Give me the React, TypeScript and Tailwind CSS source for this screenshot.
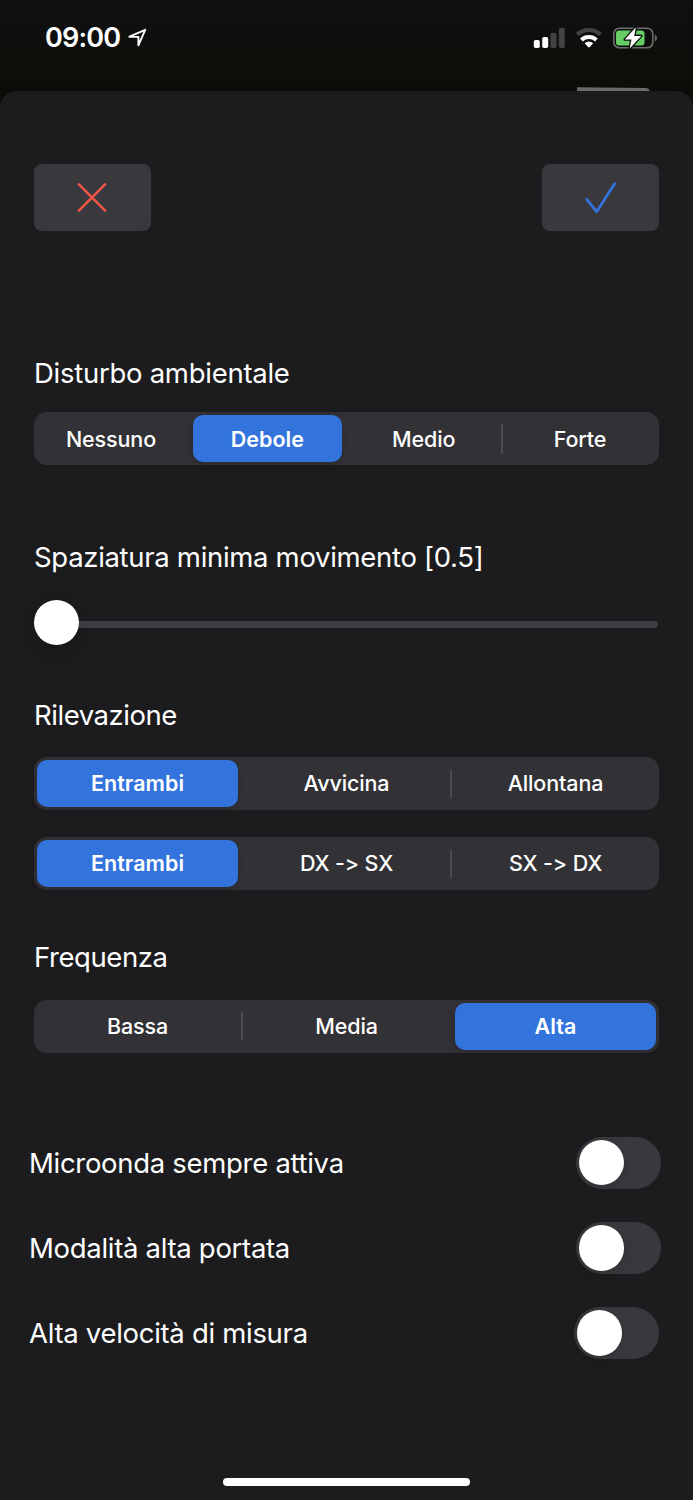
import { useState } from "react";
import clsx from "clsx";

function StatusBar() {
  return (
    <header className="flex h-[87px] w-full shrink-0 items-start justify-between bg-linear-to-b from-[#101011] to-[#0b0e08] pl-[45px] pr-[36px] pt-[22px]">
      <div className="flex h-8 items-center">
        <span className="w-[83px] whitespace-nowrap text-[27px] font-semibold leading-8 tracking-[-0.8px]">09:00</span>
        <svg className="h-8 w-5" viewBox="0 0 20 32" fill="none" stroke="#fff" strokeWidth="1.9" strokeLinejoin="round">
          <path d="M1.4 14.7 17.2 7.8 10.4 23.3V14.9Z" />
        </svg>
      </div>
      <div className="flex h-8 items-center">
        <svg className="h-8 w-[124px]" viewBox="533 22 124 32">
          <rect x="533.8" y="40" width="6" height="8" rx="1.8" fill="#fff" />
          <rect x="542.2" y="37" width="6" height="11" rx="1.8" fill="#fff" />
          <rect x="550.5" y="32.7" width="6" height="15.3" rx="1.8" fill="#424341" />
          <rect x="558.8" y="28" width="6" height="20" rx="1.8" fill="#424341" />
          <g fill="none">
            <path d="M577.3 34.4A17.2 17.2 0 0 1 600.5 34.4" stroke="#424341" strokeWidth="4" />
            <path d="M581.4 39.9A11.2 11.2 0 0 1 596.4 39.9" stroke="#fff" strokeWidth="4" />
          </g>
          <path d="M584.6 43.2Q588.9 39.9 593.2 43.2L589.7 47.1Q588.9 48 588.1 47.1Z" fill="#fff" />
          <rect x="613.8" y="28.2" width="39" height="19.6" rx="5.6" fill="none" stroke="#6c6e69" strokeWidth="1.6" />
          <path d="M654.9 34.6Q657 35.6 657 38T654.9 41.4Z" fill="#6c6e69" />
          <rect x="616" y="30.5" width="28.5" height="15" rx="3.2" fill="#65cf65" />
          <path d="M635.9 27.2 624.8 39.5H631.4L629.7 48.6 641.3 35.9H634.2Z" fill="#fff" stroke="#0d0f0b" strokeWidth="2.6" strokeLinejoin="round" paintOrder="stroke" />
        </svg>
      </div>
    </header>
  );
}

function Segmented({ name, options, initial, className }: { name: string; options: string[]; initial: number; className?: string }) {
  const [selected, setSelected] = useState(initial);
  const wide = options.length < 4;
  return (
    <div
      role="radiogroup"
      aria-label={name}
      className={clsx(
        "flex h-[53px] shrink-0 items-center rounded-[13px] bg-[#323135] [font-feature-settings:'calt'_0]",
        wide ? "px-[3px] leading-[47px]" : "pl-[2.5px] pr-[4.5px] leading-[48px]",
        className,
      )}
    >
      {options.flatMap((option, i) => {
        const active = i === selected;
        const button = (
          <button
            key={option}
            role="radio"
            aria-checked={active}
            onClick={() => setSelected(i)}
            className={clsx(
              "h-[47px] min-w-0 flex-1 rounded-[10px] text-[21.5px]",
              active
                ? "bg-[#3273dc] font-[590] tracking-[0.05px] shadow-[0_2px_8px_rgba(0,0,0,0.16)]"
                : "font-[460] tracking-[-0.12px]",
            )}
          >
            {option}
          </button>
        );
        if (i === 0) return [button];
        const hidden = active || selected === i - 1;
        return [
          <span key={`${option}-divider`} className={clsx("flex shrink-0 justify-center", wide ? "w-2" : "w-[7.4px]")}>
            <span className={clsx("h-[30px] w-[1.5px] rounded-full", hidden ? "bg-transparent" : "bg-[#4b4a4f]")} />
          </span>,
          button,
        ];
      })}
    </div>
  );
}

function Label({ children, className }: { children: string; className?: string }) {
  return <h2 className={clsx("h-[34px] shrink-0 whitespace-nowrap text-[27.5px] font-normal leading-[34px]", className)}>{children}</h2>;
}

function ToggleRow({ label, className }: { label: string; className?: string }) {
  const [on, setOn] = useState(false);
  return (
    <div className={clsx("flex h-[52px] items-center justify-between", className)}>
      <span className="whitespace-nowrap text-[27.5px] leading-[34px] tracking-[-0.3px]">{label}</span>
      <button
        role="switch"
        aria-label={label}
        aria-checked={on}
        onClick={() => setOn(!on)}
        className={clsx("flex h-[52px] w-[85px] shrink-0 items-center rounded-full px-[2.5px]", on ? "justify-end bg-[#65cf65]" : "bg-[#39383d]")}
      >
        <span className="size-[45.5px] rounded-full bg-white shadow-[0_3px_10px_rgba(0,0,0,0.14)]" />
      </button>
    </div>
  );
}

export default function App() {
  return (
    <div className="flex h-[1500px] w-[693px] flex-col overflow-hidden bg-[#0b0e08] font-['Inter',sans-serif] text-white">
      <StatusBar />
      <div className="flex h-1 shrink-0 justify-end pr-[43px]">
        <svg className="h-1 w-[73px]" viewBox="0 0 73 4" fill="#696b66">
          <path d="M0 .2 69 1Q72 1.2 73 4H0Z" />
        </svg>
      </div>
      <main className="flex min-h-0 flex-1 flex-col rounded-t-[17px] bg-[#1c1c1e] pl-[34px] pr-[34px] pt-[73px]">
        <div className="flex h-[67px] shrink-0 justify-between">
          <button aria-label="Annulla" className="flex w-[117px] items-center justify-center rounded-[8px] bg-[#39383c] pr-[2px]">
            <svg className="size-[30px]" viewBox="0 0 30 30" fill="none" stroke="#ee5545" strokeWidth="2.6" strokeLinecap="round">
              <path d="m1.9 1.4 26.2 26.2M28.1 1.4 1.9 27.6" />
            </svg>
          </button>
          <button aria-label="Conferma" className="flex w-[117px] items-center justify-center rounded-[8px] bg-[#39383c]">
            <svg className="h-8 w-8" viewBox="0 0 32 32" fill="none" stroke="#3273dc" strokeWidth="2.8" strokeLinecap="round" strokeLinejoin="round">
              <path d="M1.8 17.4 11.7 29.7 29.6 1.8" />
            </svg>
          </button>
        </div>

        <Label className="mt-[125px] tracking-[-0.27px]">Disturbo ambientale</Label>
        <Segmented className="mt-[22px]" name="Disturbo ambientale" options={["Nessuno", "Debole", "Medio", "Forte"]} initial={1} />

        <Label className="mt-[75px] tracking-[-0.31px]">Spaziatura minima movimento [0.5]</Label>
        <div className="mt-[26px] flex h-[45px] shrink-0 items-center" role="slider" aria-valuenow={0.5} aria-label="Spaziatura minima movimento">
          <span className="size-[45px] shrink-0 rounded-full bg-white shadow-[0_6px_16px_rgba(0,0,0,0.2)]" />
          <span className="mr-[1.5px] mt-[4px] h-[7px] flex-1 rounded-r-full bg-[#3d3c41]" />
        </div>

        <Label className="mt-[53px] tracking-[-0.45px]">Rilevazione</Label>
        <Segmented className="mt-[25px]" name="Rilevazione" options={["Entrambi", "Avvicina", "Allontana"]} initial={0} />
        <Segmented className="mt-[27px]" name="Direzione" options={["Entrambi", "DX -> SX", "SX -> DX"]} initial={0} />

        <Label className="mt-[50px] tracking-[-0.42px]">Frequenza</Label>
        <Segmented className="mt-[25.5px]" name="Frequenza" options={["Bassa", "Media", "Alta"]} initial={2} />

        <div className="-ml-[5px] mt-[84px] flex flex-col gap-[33.3px]">
          <ToggleRow className="-mr-[2px]" label="Microonda sempre attiva" />
          <ToggleRow className="-mr-[2px]" label="Modalità alta portata" />
          <ToggleRow label="Alta velocità di misura" />
        </div>
      </main>
      <div className="flex h-[22px] shrink-0 justify-center bg-[#1c1c1e]">
        <span className="h-[8px] w-[247px] rounded-full bg-white" />
      </div>
    </div>
  );
}
